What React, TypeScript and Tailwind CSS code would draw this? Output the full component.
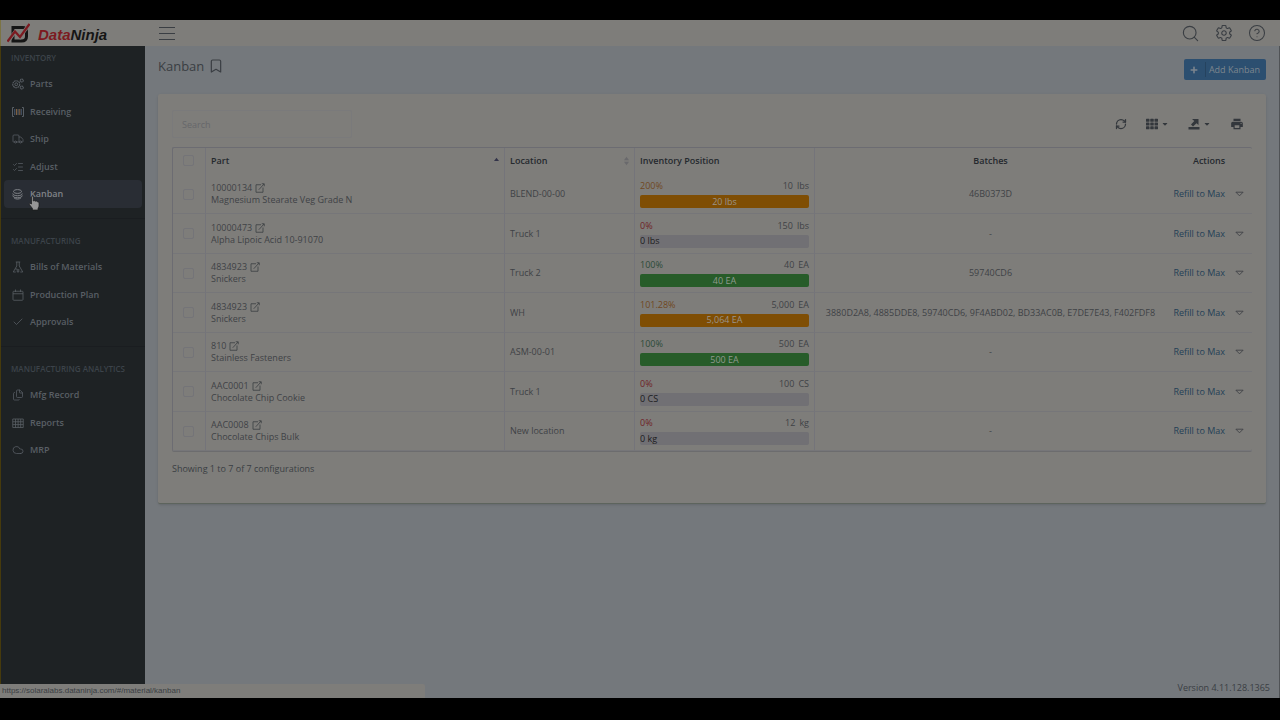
import type { ComponentType, ReactNode } from "react";
import {
  Bookmark,
  Check,
  CircleHelp,
  Cloud,
  Files,
  ListChecks,
  RefreshCw,
  Search,
  Truck,
} from "lucide-react";
import { FaCaretDown, FaPlus, FaTh } from "react-icons/fa";
import { IoSettingsOutline } from "react-icons/io5";
import { MdPrint } from "react-icons/md";

type IconProps = { className?: string; strokeWidth?: number };
type Icon = ComponentType<IconProps>;

function Line({ className, children }: { className?: string; children: ReactNode }) {
  return (
    <svg viewBox="0 0 24 24" fill="none" stroke="currentColor" strokeWidth={1.6} className={className} aria-hidden="true">
      {children}
    </svg>
  );
}

const Gears: Icon = ({ className }) => (
  <Line className={className}>
    <circle cx="8.5" cy="12.5" r="2.8" strokeWidth={2} />
    <circle cx="8.5" cy="12.5" r="7" strokeDasharray="3.6 1" strokeWidth={2.2} />
    <circle cx="19.5" cy="5" r="3" strokeDasharray="2.6 0.6" strokeWidth={2.2} />
    <circle cx="19.5" cy="19" r="3" strokeDasharray="2.6 0.6" strokeWidth={2.2} />
  </Line>
);

const Barcode: Icon = ({ className }) => (
  <Line className={className}>
    <path d="M4 3H1v18h3M20 3h3v18h-3" strokeWidth={2} />
    <path d="M5.5 6v12M18.500 6v12" stroke="#4a5a70" strokeWidth={2} />
    <path d="M9 6v12M15.500 6v12" stroke="#806040" strokeWidth={2} />
    <path d="M12.200 6v12" strokeWidth={2} />
  </Line>
);

const Stack: Icon = ({ className }) => (
  <Line className={className}>
    <path
      d="M3 7c0-5 16-5 16 0s-16 5-16 0zM1.500 11c0 6 19 6 19 0M1.500 15c0 6 19 6 19 0M4 19.500c3 3.500 11 3.500 14 0"
      strokeWidth={2}
    />
  </Line>
);

const Flask: Icon = ({ className }) => (
  <Line className={className}>
    <path d="M7.500 2h9M9.500 2v8L2.500 22h5M14.500 2v8l7 12h-5M6.500 16h4v6h3v-6" />
  </Line>
);

const CalendarBox: Icon = ({ className }) => (
  <Line className={className}>
    <rect x="2" y="4.500" width="20" height="18" rx="1.500" />
    <path d="M2 9.500h20M7 1v5M17 1v5" />
  </Line>
);

const Grid: Icon = ({ className }) => (
  <Line className={className}>
    <path d="M1.500 4h21v17h-21zM1.500 9.500h21M1.500 15.200h21M7 4v17M12.200 4v17M17.400 4v17" />
  </Line>
);

const OpenLink: Icon = ({ className }) => (
  <svg viewBox="0 0 20 20" fill="none" stroke="currentColor" strokeWidth={1.700} className={className} aria-hidden="true">
    <path d="M12 3.500H2v15h14V9M7.500 13.500 18 2M13.500 1.500h5v5" />
  </svg>
);

function Logo() {
  return (
    <svg viewBox="0 0 23 20" className="h-5 w-[23px]" aria-hidden="true">
      <path d="M6 4.500h9.500q4 0 4 4v5q0 4.500-5 4.500H6z" fill="none" stroke="#151515" strokeWidth="3" />
      <path d="M1 18.500 8 9l5 5L22 1.500" fill="none" stroke="#7e7d7a" strokeWidth="3.600" />
      <path d="M0.500 18.500 8 8.500l5 5.500L22.500 1" fill="none" stroke="#7c1a20" strokeWidth="2.200" />
    </svg>
  );
}

const sections: { title: string; items: { label: string; icon: Icon; active?: boolean }[] }[] = [
  {
    title: "INVENTORY",
    items: [
      { label: "Parts", icon: Gears },
      { label: "Receiving", icon: Barcode },
      { label: "Ship", icon: Truck },
      { label: "Adjust", icon: ListChecks },
      { label: "Kanban", icon: Stack, active: true },
    ],
  },
  {
    title: "MANUFACTURING",
    items: [
      { label: "Bills of Materials", icon: Flask },
      { label: "Production Plan", icon: CalendarBox },
      { label: "Approvals", icon: Check },
    ],
  },
  {
    title: "MANUFACTURING ANALYTICS",
    items: [
      { label: "Mfg Record", icon: Files },
      { label: "Reports", icon: Grid },
      { label: "MRP", icon: Cloud },
    ],
  },
];

type Level = "over" | "full" | "empty";
type Row = {
  part: string;
  name: string;
  location: string;
  percent: string;
  max: string;
  unit: string;
  onHand: string;
  level: Level;
  batches: string;
};

const rows: Row[] = [
  { part: "10000134", name: "Magnesium Stearate Veg Grade N", location: "BLEND-00-00", percent: "200%", max: "10", unit: "lbs", onHand: "20 lbs", level: "over", batches: "46B0373D" },
  { part: "10000473", name: "Alpha Lipoic Acid 10-91070", location: "Truck 1", percent: "0%", max: "150", unit: "lbs", onHand: "0 lbs", level: "empty", batches: "-" },
  { part: "4834923", name: "Snickers", location: "Truck 2", percent: "100%", max: "40", unit: "EA", onHand: "40 EA", level: "full", batches: "59740CD6" },
  { part: "4834923", name: "Snickers", location: "WH", percent: "101.28%", max: "5,000", unit: "EA", onHand: "5,064 EA", level: "over", batches: "3880D2A8, 4885DDE8, 59740CD6, 9F4ABD02, BD33AC0B, E7DE7E43, F402FDF8" },
  { part: "810", name: "Stainless Fasteners", location: "ASM-00-01", percent: "100%", max: "500", unit: "EA", onHand: "500 EA", level: "full", batches: "-" },
  { part: "AAC0001", name: "Chocolate Chip Cookie", location: "Truck 1", percent: "0%", max: "100", unit: "CS", onHand: "0 CS", level: "empty", batches: "" },
  { part: "AAC0008", name: "Chocolate Chips Bulk", location: "New location", percent: "0%", max: "12", unit: "kg", onHand: "0 kg", level: "empty", batches: "-" },
];

const percentColor: Record<Level, string> = {
  over: "text-[#70481f]",
  full: "text-[#2c4a38]",
  empty: "text-[#6e2226]",
};

const barStyle: Record<Level, string> = {
  over: "bg-[#7f4e04] text-[#9a948a] justify-center",
  full: "bg-[#275c29] text-[#8f9a8f] justify-center",
  empty: "bg-[#717074] text-[#1c1c1e]",
};

const checkbox =
  "block size-[11px] appearance-none rounded-xs border border-[#747478] checked:bg-[#2a4d6e]";

function Sidebar() {
  return (
    <nav className="w-[145px] shrink-0 border-l border-[#463a0c] bg-[#1e2224]">
      {sections.map((section, i) => (
        <section key={section.title} className={i === 0 ? "pt-1" : "mt-[10px] border-t border-[#1a1d20] pt-[14px]"}>
          <h2 className="flex h-4 items-center pl-[10px] text-[8px] font-semibold whitespace-nowrap text-[#3c434a]">
            {section.title}
          </h2>
          <ul className="pt-1">
            {section.items.map(({ label, icon: ItemIcon, active }) => (
              <li key={label} className="h-[27px] odd:h-7">
                <a
                  href="#kanban"
                  className={
                    "mx-[3px] flex h-full items-center gap-[6px] rounded-sm pl-2 text-[9px] font-semibold " +
                    (active ? "bg-[#292d34] text-[#808388]" : "text-[#595f65]")
                  }
                >
                  <ItemIcon className="h-3 w-3" strokeWidth={1.500} />
                  {label}
                </a>
              </li>
            ))}
          </ul>
        </section>
      ))}
    </nav>
  );
}

function Toolbar() {
  const button = "flex h-5 items-center gap-[3px] text-[#33373c]";
  return (
    <div className="flex items-start justify-between pt-4">
      <input
        aria-label="Search"
        placeholder="Search"
        className="h-7 w-[180px] rounded-xs border border-[#7a7a7b] bg-transparent px-[9px] text-[9px] placeholder:text-[#66676a]"
      />
      <div className="flex items-center gap-[19px] pt-1 pr-2">
        <button aria-label="Refresh" className={button}>
          <RefreshCw className="size-3" strokeWidth={2.500} />
        </button>
        <button aria-label="Columns" className={button}>
          <FaTh className="size-3" />
          <FaCaretDown className="size-2" />
        </button>
        <button aria-label="Export" className={button}>
          <svg viewBox="0 0 12 12" className="size-3" fill="currentColor" aria-hidden="true">
            <path d="M0.500 9h11v2.500h-11zM4 1h6.500v6L8.500 5.200 5 8.500 3 6.500 6.300 3z" />
          </svg>
          <FaCaretDown className="size-2" />
        </button>
        <button aria-label="Print" className={button}>
          <MdPrint className="size-[14px]" />
        </button>
      </div>
    </div>
  );
}

function KanbanTable() {
  const cell = "border-r border-b border-r-[#74747a] border-b-[#767679] px-[5px]";
  const last = "border-b border-[#767679]";
  const head = "border-r border-[#74747a] px-[5px] pb-[2px] text-left font-semibold";
  return (
    <table className="mt-[9px] w-full table-fixed border-separate border-spacing-0 rounded-xs border-t border-l border-[#6c6c72] text-[9px] leading-3 text-[#3f4246] shadow-[0_1px_0_#6c6c6e]">
      <colgroup>
        <col className="w-[33px]" />
        <col className="w-[299px]" />
        <col className="w-[130px]" />
        <col className="w-[180px]" />
        <col />
        <col className="w-[86px]" />
      </colgroup>
      <thead>
        <tr className="h-[27px] text-[#25292e]">
          <th className="border-r border-[#74747a] pb-[2px] pl-[10px]">
            <input type="checkbox" aria-label="Select all" className={checkbox} />
          </th>
          <th className={head}>
            <div className="flex items-center justify-between">
              Part
              <svg viewBox="0 0 6 10" className="h-[10px] w-[5px]" aria-hidden="true">
                <path d="M3 1 6 5H0z" fill="#33344a" />
              </svg>
            </div>
          </th>
          <th className={head}>
            <div className="flex items-center justify-between">
              Location
              <svg viewBox="0 0 6 10" className="h-[10px] w-[5px]" aria-hidden="true">
                <path d="M3 0 6 4H0zM3 10 0 6h6z" fill="#69696c" />
              </svg>
            </div>
          </th>
          <th className={head}>Inventory Position</th>
          <th className="px-[5px] pb-[2px] text-center font-semibold">Batches</th>
          <th className="pb-[2px] text-center font-semibold">Actions</th>
        </tr>
      </thead>
      <tbody>
        {rows.map((row, i) => (
          <tr key={i} className="h-10 odd:h-[39px]">
            <td className="border-r border-b border-r-[#74747a] border-b-[#767679] pl-[10px]">
              <input type="checkbox" aria-label={"Select " + row.part} className={checkbox} />
            </td>
            <td className={cell}>
              <a href="#part" className="flex items-center gap-[3px]">
                {row.part}
                <OpenLink className="size-[10px]" />
              </a>
              <div>{row.name}</div>
            </td>
            <td className={cell}>{row.location}</td>
            <td className={cell}>
              <div className="flex justify-between pb-[3px]">
                <span className={percentColor[row.level]}>{row.percent}</span>
                <span className="flex gap-1">
                  <span>{row.max}</span>
                  <span>{row.unit}</span>
                </span>
              </div>
              <div className={"flex h-[13px] items-center rounded-xs " + barStyle[row.level]}>{row.onHand}</div>
            </td>
            <td className={last + " px-[5px] text-center"}>{row.batches}</td>
            <td className={last}>
              <div className="flex items-center justify-end gap-[10px] pr-2">
                <button className="text-[#243f56]">Refill to Max</button>
                <button aria-label="More actions">
                  <svg viewBox="0 0 10 6" className="h-[6px] w-[9px]" fill="none" stroke="#3f4246" aria-hidden="true">
                    <path d="M1 1h8L5 5z" />
                  </svg>
                </button>
              </div>
            </td>
          </tr>
        ))}
      </tbody>
    </table>
  );
}

export default function App() {
  return (
    <div className="flex min-h-screen flex-col bg-black pt-5 pb-[22px] font-['Open_Sans',sans-serif] text-[#3a3e43]">
      <div className="relative flex grow flex-col">
        <header className="flex h-[26px] shrink-0 items-center justify-between border-l border-[#7c7444] bg-[#7e7d7a] pr-[14px] pl-[6px]">
          <div className="flex items-center">
            <a href="#home" className="flex w-[152px] items-center gap-2">
              <Logo />
              <span className="pt-[3px] font-['Liberation_Sans',sans-serif] text-[15px] leading-5 font-bold text-[#151515] italic">
                <span className="text-[#7c1a20]">Data</span>Ninja
              </span>
            </a>
            <button aria-label="Toggle menu" className="flex w-4 flex-col gap-[5px]">
              <span className="h-px bg-[#3a3e43]" />
              <span className="h-px bg-[#3a3e43]" />
              <span className="h-px bg-[#3a3e43]" />
            </button>
          </div>
          <div className="flex items-center gap-[15px]">
            <button aria-label="Search">
              <Search className="size-[19px]" strokeWidth={1.400} />
            </button>
            <button aria-label="Settings">
              <IoSettingsOutline className="size-[18px]" />
            </button>
            <button aria-label="Help">
              <CircleHelp className="size-[18px]" strokeWidth={1.400} />
            </button>
          </div>
        </header>
        <div className="flex grow">
          <Sidebar />
          <div className="flex min-w-0 grow flex-col border-r border-[#505356] bg-[#74787c] px-[13px]">
            <div className="flex h-12 items-start justify-between">
              <h1 className="flex items-center gap-1 pt-[11px] text-[13px] leading-[18px]">
                Kanban
                <Bookmark className="size-4" strokeWidth={1.800} />
              </h1>
              <button className="mt-[13px] flex h-[21px] items-center rounded-xs bg-[#2c4f70] text-[9px] text-[#7d868e]">
                <span className="flex h-[15px] w-[22px] items-center justify-center border-r border-[#25435f]">
                  <FaPlus className="size-2" />
                </span>
                <span className="pr-[6px] pl-[3px]">Add Kanban</span>
              </button>
            </div>
            <main className="rounded-xs border-b border-[#5d645d] bg-[#7e7d7a] px-[14px] pb-[27px] shadow-sm">
              <Toolbar />
              <KanbanTable />
              <p className="pt-[11px] text-[9px] leading-[14px]">Showing 1 to 7 of 7 configurations</p>
            </main>
            <footer className="-mr-1 mt-auto flex justify-end pb-1 text-[9px] leading-3">Version 4.11.128.1365</footer>
          </div>
        </div>
        <div className="absolute bottom-0 left-0 flex h-[14px] w-[425px] items-center rounded-tr-xs bg-[#7e7d7a] pl-[2px] font-['Liberation_Sans',sans-serif] text-[8px]">
          https://solaralabs.dataninja.com/#/material/kanban
        </div>
        <svg viewBox="0 0 12 16" className="absolute top-[175px] left-[28px] h-4 w-3" aria-hidden="true">
          <path
            d="M3.500 1.500q1.200-1 1.800 0.500v4l1-.4 1 .6 1-.3 1 .8 1.200.2.500 1v3.300l-1 2.300v1.500H4.500V13.500L1 9q.5-1.500 2.500 0z"
            fill="#969696"
            stroke="#1b1b1b"
            strokeWidth="0.700"
          />
        </svg>
      </div>
    </div>
  );
}
